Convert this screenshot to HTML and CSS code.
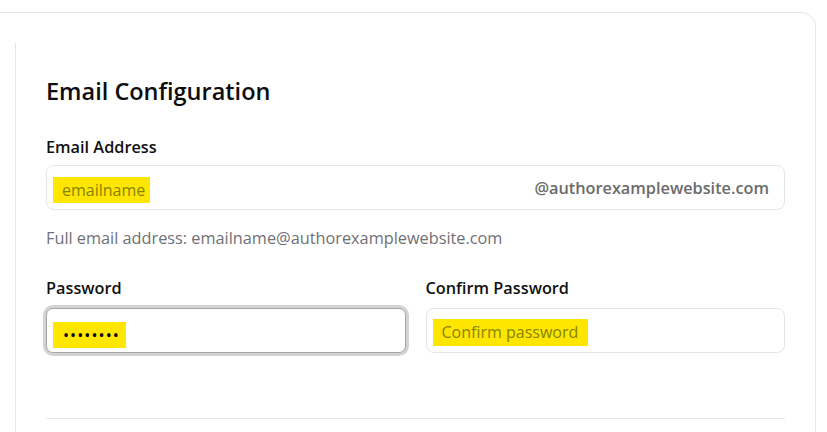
FILE: index.html
```html
<!DOCTYPE html>
<html lang="en">
<head>
<meta charset="utf-8">
<title>Email Configuration</title>
<link rel="stylesheet" href="styles.css">
</head>
<body>
<div class="page">
  <div class="card">
    <section class="section">
      <h2 class="title">Email Configuration</h2>

      <div class="field">
        <div class="label label-email">Email Address</div>
        <div class="input">
          <span class="hl hl-email">emailname</span>
          <span class="suffix">@authorexamplewebsite.com</span>
        </div>
        <div class="helper">Full email address: emailname@authorexamplewebsite.com</div>
      </div>

      <div class="row">
        <div class="field">
          <div class="label label-pw">Password</div>
          <div class="input input-focus">
            <span class="hl hl-pw">••••••••</span>
          </div>
        </div>
        <div class="field">
          <div class="label label-pw">Confirm Password</div>
          <div class="input">
            <span class="hl hl-confirm">Confirm password</span>
          </div>
        </div>
      </div>

      <div class="divider"></div>
    </section>
  </div>
</div>
</body>
</html>
```
FILE: styles.css
```css
html, body {
  margin: 0;
  padding: 0;
  background: #ffffff;
  overflow: hidden;
}

body {
  font-family: "Open Sans", "Noto Sans", sans-serif;
  color: #111111;
  height: 432px;
}

.page {
  box-sizing: border-box;
  height: 432px;
  padding-top: 12px;
}

.card {
  box-sizing: border-box;
  height: 420px;
  margin: 0 11px 0 -16px;
  border: 1px solid #e6e6e6;
  border-bottom: 0;
  border-radius: 15px 15px 0 0;
  padding: 30px 0 0 30px;
  background: #ffffff;
  display: flex;
  flex-direction: column;
}

.section {
  flex: 1;
  border-left: 1px solid #e6e6e6;
  padding: 32px 30px 0 30px;
}

.title {
  margin: 0 0 28px;
  font-size: 23.5px;
  line-height: 32px;
  font-weight: 600;
  color: #0d0d0d;
}

.label {
  font-size: 16.3px;
  line-height: 24px;
  font-weight: 600;
  color: #111111;
}

.label-email {
  margin-bottom: 6px;
}

.label-pw {
  margin-bottom: 8px;
}

.input {
  box-sizing: border-box;
  height: 45px;
  border: 1px solid #e5e5e5;
  border-radius: 8px;
  display: flex;
  align-items: flex-start;
  padding: 0 15px 0 6px;
  background: #ffffff;
}

.input-focus {
  border-color: #a6a6a6;
  box-shadow: 0 0 0 3px #d3d3d3;
  border-radius: 7px;
}

.hl {
  background: #ffe600;
  font-size: 16px;
  line-height: 26px;
  color: #878300;
}

.hl-email {
  margin-top: 11px;
  padding: 0 5px 0 9px;
}

.hl-pw {
  margin-top: 13px;
  padding: 0 6px 0 10px;
  color: #000000;
  letter-spacing: 1.1px;
}

.hl-confirm {
  margin-top: 10px;
  padding: 0 10px 0 9px;
  line-height: 27px;
}

.suffix {
  margin-left: auto;
  margin-top: 10px;
  font-size: 16.3px;
  line-height: 24px;
  font-weight: 600;
  color: #6b6b6b;
}

.helper {
  margin-top: 16px;
  font-size: 16.3px;
  line-height: 24px;
  color: #6f7076;
}

.row {
  display: grid;
  grid-template-columns: 1fr 1fr;
  column-gap: 20px;
  margin-top: 26px;
}

.divider {
  margin-top: 65px;
  height: 1px;
  background: #e6e6e6;
}
```
